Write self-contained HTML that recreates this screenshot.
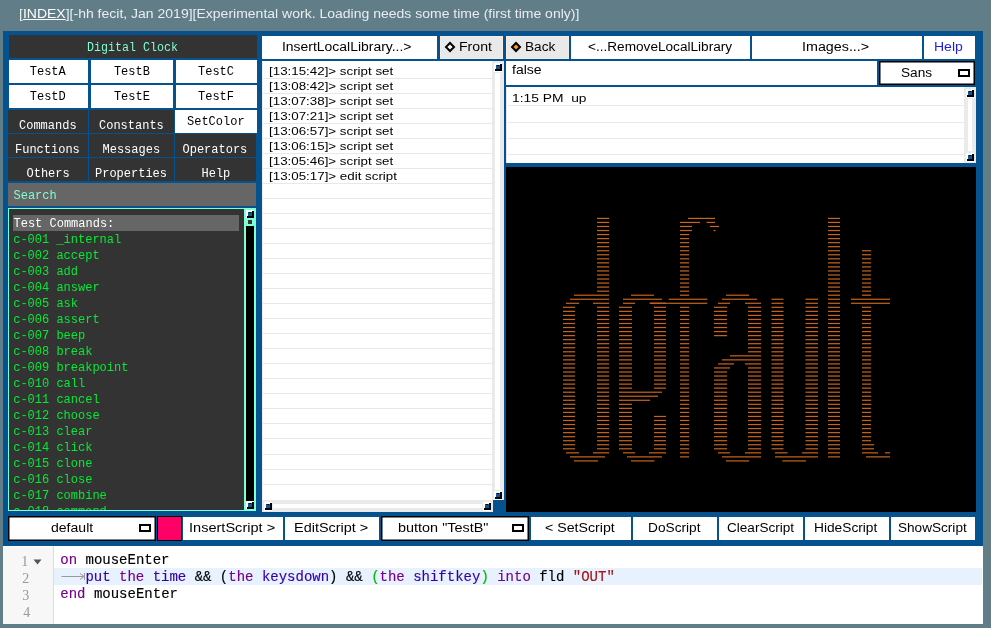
<!DOCTYPE html>
<html><head><meta charset="utf-8"><style>
html,body{margin:0;padding:0;}
#r{position:relative;will-change:transform;width:991px;height:628px;background:#607d88;overflow:hidden;}
#r>div,#r>svg{position:absolute;}
#r>div{white-space:pre;transform-origin:0 0;}
</style></head><body><div id="r">
<div style="left:3px;top:31px;width:980px;height:515px;background:#05528e"></div>
<div style="left:9px;top:35px;width:248px;height:23px;background:#333333"></div>
<div style="left:9px;top:60px;width:79px;height:23px;background:#fff"></div>
<div style="left:9px;top:85px;width:79px;height:23px;background:#fff"></div>
<div style="left:91px;top:60px;width:82px;height:23px;background:#fff"></div>
<div style="left:91px;top:85px;width:82px;height:23px;background:#fff"></div>
<div style="left:176px;top:60px;width:81px;height:23px;background:#fff"></div>
<div style="left:176px;top:85px;width:81px;height:23px;background:#fff"></div>
<div style="left:8px;top:110px;width:80px;height:23px;background:#333333"></div>
<div style="left:89px;top:110px;width:85px;height:23px;background:#333333"></div>
<div style="left:175px;top:110px;width:82px;height:23px;background:#fff"></div>
<div style="left:8px;top:134px;width:80px;height:23px;background:#333333"></div>
<div style="left:89px;top:134px;width:85px;height:23px;background:#333333"></div>
<div style="left:175px;top:134px;width:81px;height:23px;background:#333333"></div>
<div style="left:8px;top:158px;width:80px;height:23px;background:#333333"></div>
<div style="left:89px;top:158px;width:85px;height:23px;background:#333333"></div>
<div style="left:175px;top:158px;width:81px;height:23px;background:#333333"></div>
<div style="left:8px;top:183px;width:248px;height:23px;background:#666"></div>
<div style="left:8px;top:208px;width:248px;height:303px;background:#7fffd4"></div>
<div style="left:9px;top:209px;width:235px;height:301px;background:#333333"></div>
<div style="left:13px;top:215px;width:226px;height:16px;background:#666"></div>
<div style="left:246px;top:226px;width:8px;height:275px;background:#000"></div>
<div style="left:248px;top:220px;width:4px;height:4px;background:#383838"></div>
<div style="left:262px;top:36px;width:175px;height:23px;background:#fff"></div>
<div style="left:440px;top:36px;width:63px;height:23px;background:#e9e9e9;box-shadow:inset 0 0 0 1px #f3ece6"></div>
<div style="left:262px;top:61px;width:230px;height:439px;background:#fff"></div>
<div style="left:262px;top:61px;width:1px;height:438px;background:#eee"></div>
<div style="left:263px;top:78px;width:229px;height:1px;background:#e8e8e8"></div>
<div style="left:263px;top:93px;width:229px;height:1px;background:#e8e8e8"></div>
<div style="left:263px;top:108px;width:229px;height:1px;background:#e8e8e8"></div>
<div style="left:263px;top:123px;width:229px;height:1px;background:#e8e8e8"></div>
<div style="left:263px;top:138px;width:229px;height:1px;background:#e8e8e8"></div>
<div style="left:263px;top:153px;width:229px;height:1px;background:#e8e8e8"></div>
<div style="left:263px;top:168px;width:229px;height:1px;background:#e8e8e8"></div>
<div style="left:263px;top:183px;width:229px;height:1px;background:#e8e8e8"></div>
<div style="left:263px;top:198px;width:229px;height:1px;background:#e8e8e8"></div>
<div style="left:263px;top:213px;width:229px;height:1px;background:#e8e8e8"></div>
<div style="left:263px;top:228px;width:229px;height:1px;background:#e8e8e8"></div>
<div style="left:263px;top:243px;width:229px;height:1px;background:#e8e8e8"></div>
<div style="left:263px;top:258px;width:229px;height:1px;background:#e8e8e8"></div>
<div style="left:263px;top:273px;width:229px;height:1px;background:#e8e8e8"></div>
<div style="left:263px;top:288px;width:229px;height:1px;background:#e8e8e8"></div>
<div style="left:263px;top:303px;width:229px;height:1px;background:#e8e8e8"></div>
<div style="left:263px;top:318px;width:229px;height:1px;background:#e8e8e8"></div>
<div style="left:263px;top:333px;width:229px;height:1px;background:#e8e8e8"></div>
<div style="left:263px;top:348px;width:229px;height:1px;background:#e8e8e8"></div>
<div style="left:263px;top:363px;width:229px;height:1px;background:#e8e8e8"></div>
<div style="left:263px;top:378px;width:229px;height:1px;background:#e8e8e8"></div>
<div style="left:263px;top:393px;width:229px;height:1px;background:#e8e8e8"></div>
<div style="left:263px;top:408px;width:229px;height:1px;background:#e8e8e8"></div>
<div style="left:263px;top:423px;width:229px;height:1px;background:#e8e8e8"></div>
<div style="left:263px;top:438px;width:229px;height:1px;background:#e8e8e8"></div>
<div style="left:263px;top:454px;width:229px;height:1px;background:#e8e8e8"></div>
<div style="left:263px;top:469px;width:229px;height:1px;background:#e8e8e8"></div>
<div style="left:263px;top:484px;width:229px;height:1px;background:#e8e8e8"></div>
<div style="left:492px;top:61px;width:12px;height:439px;background:#eaeaea"></div>
<div style="left:495px;top:73px;width:5px;height:417px;background:#fff"></div>
<div style="left:262px;top:500px;width:231px;height:12px;background:#eaeaea"></div>
<div style="left:273px;top:504px;width:209px;height:4px;background:#fff"></div>
<div style="left:506px;top:36px;width:63px;height:23px;background:#e9e9e9;box-shadow:inset 0 0 0 1px #f3ece6"></div>
<div style="left:571px;top:36px;width:179px;height:23px;background:#fff"></div>
<div style="left:752px;top:36px;width:170px;height:23px;background:#fff"></div>
<div style="left:924px;top:36px;width:51px;height:23px;background:#fff"></div>
<div style="left:506px;top:61px;width:371px;height:24px;background:#fff"></div>
<div style="left:879px;top:61px;width:96px;height:24px;background:#fff;box-shadow:inset 0 0 0 1.5px #000"></div>
<div style="left:506px;top:87px;width:470px;height:76px;background:#fff"></div>
<div style="left:506px;top:88px;width:1px;height:75px;background:#e6e6e6"></div>
<div style="left:508px;top:105px;width:456px;height:1px;background:#e8e8e8"></div>
<div style="left:508px;top:122px;width:456px;height:1px;background:#e8e8e8"></div>
<div style="left:508px;top:138px;width:456px;height:1px;background:#e8e8e8"></div>
<div style="left:508px;top:154px;width:456px;height:1px;background:#e8e8e8"></div>
<div style="left:964px;top:87px;width:12px;height:76px;background:#eaeaea"></div>
<div style="left:968px;top:99px;width:4px;height:52px;background:#fff"></div>
<div style="left:506px;top:167px;width:470px;height:345px;background:#000"></div>
<div style="left:8px;top:516px;width:148px;height:25px;background:#fff;box-shadow:inset 0 0 0 1.5px #000"></div>
<div style="left:157px;top:516px;width:25px;height:25px;background:#ff0066;box-shadow:inset 0 0 0 1px #000"></div>
<div style="left:183px;top:517px;width:100px;height:23px;background:#fff"></div>
<div style="left:285px;top:517px;width:94px;height:23px;background:#fff"></div>
<div style="left:531px;top:517px;width:100px;height:23px;background:#fff"></div>
<div style="left:633px;top:517px;width:84px;height:23px;background:#fff"></div>
<div style="left:719px;top:517px;width:84px;height:23px;background:#fff"></div>
<div style="left:805px;top:517px;width:84px;height:23px;background:#fff"></div>
<div style="left:891px;top:517px;width:84px;height:23px;background:#fff"></div>
<div style="left:381px;top:516px;width:148px;height:25px;background:#fff;box-shadow:inset 0 0 0 1.5px #000"></div>
<div style="left:3px;top:546px;width:980px;height:78px;background:#fff"></div>
<div style="left:3px;top:547px;width:50px;height:77px;background:#f7f7f7"></div>
<div style="left:53px;top:546px;width:1px;height:78px;background:#ddd"></div>
<div style="left:54px;top:568px;width:928px;height:17px;background:#e8f2ff"></div>
<div style="left:139px;top:524px;width:12px;height:8px;box-shadow:inset 0 0 0 2px #000"></div>
<div style="left:512px;top:524px;width:12px;height:8px;box-shadow:inset 0 0 0 2px #000"></div>
<div style="left:958px;top:69px;width:12px;height:8px;box-shadow:inset 0 0 0 2px #000"></div>
<svg style="left:246px;top:210px" width="8" height="8"><rect x="0" y="0" width="8" height="8" fill="#fff"/><rect x="1" y="6" width="7" height="2" fill="#000"/><rect x="6" y="1" width="2" height="7" fill="#000"/><rect x="2" y="2" width="4" height="4" fill="#0b5699"/><rect x="3" y="2" width="2" height="1" fill="#000"/></svg>
<svg style="left:246px;top:501px" width="8" height="8"><rect x="0" y="0" width="8" height="8" fill="#fff"/><rect x="1" y="6" width="7" height="2" fill="#000"/><rect x="6" y="1" width="2" height="7" fill="#000"/><rect x="2" y="2" width="4" height="4" fill="#0b5699"/><rect x="3" y="2" width="2" height="1" fill="#000"/></svg>
<svg style="left:494px;top:63px" width="8" height="9"><rect x="0" y="0" width="8" height="9" fill="#fff"/><rect x="1" y="6" width="7" height="2" fill="#000"/><rect x="6" y="1" width="2" height="7" fill="#000"/><rect x="2" y="2" width="4" height="4" fill="#0b5699"/><rect x="3" y="2" width="2" height="1" fill="#000"/></svg>
<svg style="left:494px;top:491px" width="8" height="9"><rect x="0" y="0" width="8" height="9" fill="#fff"/><rect x="1" y="6" width="7" height="2" fill="#000"/><rect x="6" y="1" width="2" height="7" fill="#000"/><rect x="2" y="2" width="4" height="4" fill="#0b5699"/><rect x="3" y="2" width="2" height="1" fill="#000"/></svg>
<svg style="left:264px;top:502px" width="8" height="9"><rect x="0" y="0" width="8" height="9" fill="#fff"/><rect x="1" y="6" width="7" height="2" fill="#000"/><rect x="6" y="1" width="2" height="7" fill="#000"/><rect x="2" y="2" width="4" height="4" fill="#0b5699"/><rect x="3" y="2" width="2" height="1" fill="#000"/></svg>
<svg style="left:483px;top:502px" width="8" height="9"><rect x="0" y="0" width="8" height="9" fill="#fff"/><rect x="1" y="6" width="7" height="2" fill="#000"/><rect x="6" y="1" width="2" height="7" fill="#000"/><rect x="2" y="2" width="4" height="4" fill="#0b5699"/><rect x="3" y="2" width="2" height="1" fill="#000"/></svg>
<svg style="left:966px;top:89px" width="8" height="9"><rect x="0" y="0" width="8" height="9" fill="#fff"/><rect x="1" y="6" width="7" height="2" fill="#000"/><rect x="6" y="1" width="2" height="7" fill="#000"/><rect x="2" y="2" width="4" height="4" fill="#0b5699"/><rect x="3" y="2" width="2" height="1" fill="#000"/></svg>
<svg style="left:966px;top:153px" width="8" height="9"><rect x="0" y="0" width="8" height="9" fill="#fff"/><rect x="1" y="6" width="7" height="2" fill="#000"/><rect x="6" y="1" width="2" height="7" fill="#000"/><rect x="2" y="2" width="4" height="4" fill="#0b5699"/><rect x="3" y="2" width="2" height="1" fill="#000"/></svg>
<svg style="left:443.3px;top:39.7px" width="14" height="14"><path d="M7 1.6 L12.4 7 L7 12.4 L1.6 7 Z" fill="#000"/><path d="M7 4.4 L9.6 7 L7 9.6 L4.4 7 Z" fill="#fff"/></svg>
<svg style="left:509.29999999999995px;top:39.6px" width="14" height="14"><path d="M7 1.6 L12.4 7 L7 12.4 L1.6 7 Z" fill="#000"/><path d="M7 4.4 L9.6 7 L7 9.6 L4.4 7 Z" fill="#ff9a1a"/></svg>
<svg style="left:61px;top:572px" width="26" height="10"><path d="M0.5 4.5 H22" stroke="#999" stroke-width="1"/><path d="M19 1.5 L23 4.5 L19 7.5" stroke="#999" fill="none" stroke-width="1"/><path d="M23.5 1 V8" stroke="#999" stroke-width="1"/></svg>
<svg style="left:33px;top:559px" width="9" height="6"><path d="M0.5 0.5 H8.5 L4.5 5.5 Z" fill="#555"/></svg>
<svg style="left:0;top:0" width="991" height="628"><g fill="#c66420"><rect x="597" y="217.80" width="12" height="1.2"/><rect x="688" y="217.80" width="27" height="1.2"/><rect x="828" y="217.80" width="12" height="1.2"/><rect x="597" y="221.84" width="12" height="1.2"/><rect x="680" y="221.84" width="20" height="1.2"/><rect x="706.5" y="221.84" width="8.5" height="1.2"/><rect x="828" y="221.84" width="12" height="1.2"/><rect x="597" y="225.88" width="12" height="1.2"/><rect x="680" y="225.88" width="12" height="1.2"/><rect x="710" y="225.88" width="9" height="1.2"/><rect x="828" y="225.88" width="12" height="1.2"/><rect x="597" y="229.93" width="12" height="1.2"/><rect x="680" y="229.93" width="12" height="1.2"/><rect x="713.5" y="229.93" width="2.0" height="1.2"/><rect x="828" y="229.93" width="12" height="1.2"/><rect x="597" y="233.97" width="12" height="1.2"/><rect x="680" y="233.97" width="9" height="1.2"/><rect x="828" y="233.97" width="12" height="1.2"/><rect x="597" y="238.01" width="12" height="1.2"/><rect x="680" y="238.01" width="9" height="1.2"/><rect x="828" y="238.01" width="12" height="1.2"/><rect x="597" y="242.05" width="12" height="1.2"/><rect x="680" y="242.05" width="9" height="1.2"/><rect x="828" y="242.05" width="12" height="1.2"/><rect x="597" y="246.09" width="12" height="1.2"/><rect x="680" y="246.09" width="9" height="1.2"/><rect x="828" y="246.09" width="12" height="1.2"/><rect x="597" y="250.14" width="12" height="1.2"/><rect x="680" y="250.14" width="9" height="1.2"/><rect x="828" y="250.14" width="12" height="1.2"/><rect x="862" y="250.14" width="9" height="1.2"/><rect x="597" y="254.18" width="12" height="1.2"/><rect x="680" y="254.18" width="9" height="1.2"/><rect x="828" y="254.18" width="12" height="1.2"/><rect x="862" y="254.18" width="9" height="1.2"/><rect x="597" y="258.22" width="12" height="1.2"/><rect x="680" y="258.22" width="9" height="1.2"/><rect x="828" y="258.22" width="12" height="1.2"/><rect x="862" y="258.22" width="9" height="1.2"/><rect x="597" y="262.26" width="12" height="1.2"/><rect x="680" y="262.26" width="9" height="1.2"/><rect x="828" y="262.26" width="12" height="1.2"/><rect x="862" y="262.26" width="9" height="1.2"/><rect x="597" y="266.30" width="12" height="1.2"/><rect x="680" y="266.30" width="9" height="1.2"/><rect x="828" y="266.30" width="12" height="1.2"/><rect x="862" y="266.30" width="9" height="1.2"/><rect x="597" y="270.35" width="12" height="1.2"/><rect x="680" y="270.35" width="9" height="1.2"/><rect x="828" y="270.35" width="12" height="1.2"/><rect x="862" y="270.35" width="9" height="1.2"/><rect x="597" y="274.39" width="12" height="1.2"/><rect x="680" y="274.39" width="9" height="1.2"/><rect x="828" y="274.39" width="12" height="1.2"/><rect x="862" y="274.39" width="9" height="1.2"/><rect x="597" y="278.43" width="12" height="1.2"/><rect x="680" y="278.43" width="9" height="1.2"/><rect x="828" y="278.43" width="12" height="1.2"/><rect x="862" y="278.43" width="9" height="1.2"/><rect x="597" y="282.47" width="12" height="1.2"/><rect x="680" y="282.47" width="9" height="1.2"/><rect x="828" y="282.47" width="12" height="1.2"/><rect x="862" y="282.47" width="9" height="1.2"/><rect x="597" y="286.51" width="12" height="1.2"/><rect x="680" y="286.51" width="9" height="1.2"/><rect x="828" y="286.51" width="12" height="1.2"/><rect x="862" y="286.51" width="9" height="1.2"/><rect x="597" y="290.56" width="12" height="1.2"/><rect x="680" y="290.56" width="9" height="1.2"/><rect x="828" y="290.56" width="12" height="1.2"/><rect x="862" y="290.56" width="9" height="1.2"/><rect x="574" y="294.60" width="35" height="1.2"/><rect x="631" y="294.60" width="23" height="1.2"/><rect x="680" y="294.60" width="9" height="1.2"/><rect x="726" y="294.60" width="23" height="1.2"/><rect x="828" y="294.60" width="12" height="1.2"/><rect x="862" y="294.60" width="9" height="1.2"/><rect x="570" y="298.64" width="39" height="1.2"/><rect x="623" y="298.64" width="39" height="1.2"/><rect x="668.7" y="298.64" width="38.59999999999991" height="1.2"/><rect x="722" y="298.64" width="35" height="1.2"/><rect x="771.5" y="298.64" width="12.0" height="1.2"/><rect x="805.5" y="298.64" width="12.5" height="1.2"/><rect x="828" y="298.64" width="12" height="1.2"/><rect x="851" y="298.64" width="39" height="1.2"/><rect x="566" y="302.68" width="13" height="1.2"/><rect x="593" y="302.68" width="16" height="1.2"/><rect x="623" y="302.68" width="12" height="1.2"/><rect x="650" y="302.68" width="16" height="1.2"/><rect x="668.7" y="302.68" width="38.59999999999991" height="1.2"/><rect x="649.6" y="302.68" width="19.100000000000023" height="1.2"/><rect x="718" y="302.68" width="12" height="1.2"/><rect x="745" y="302.68" width="16" height="1.2"/><rect x="771.5" y="302.68" width="12.0" height="1.2"/><rect x="805.5" y="302.68" width="12.5" height="1.2"/><rect x="828" y="302.68" width="12" height="1.2"/><rect x="851" y="302.68" width="39" height="1.2"/><rect x="563" y="306.72" width="12" height="1.2"/><rect x="597" y="306.72" width="12" height="1.2"/><rect x="619" y="306.72" width="13" height="1.2"/><rect x="654" y="306.72" width="12" height="1.2"/><rect x="680" y="306.72" width="9" height="1.2"/><rect x="714" y="306.72" width="13" height="1.2"/><rect x="748" y="306.72" width="13" height="1.2"/><rect x="771.5" y="306.72" width="12.0" height="1.2"/><rect x="805.5" y="306.72" width="12.5" height="1.2"/><rect x="828" y="306.72" width="12" height="1.2"/><rect x="862" y="306.72" width="9" height="1.2"/><rect x="563" y="310.77" width="12" height="1.2"/><rect x="597" y="310.77" width="12" height="1.2"/><rect x="619" y="310.77" width="13" height="1.2"/><rect x="654" y="310.77" width="12" height="1.2"/><rect x="680" y="310.77" width="9" height="1.2"/><rect x="714" y="310.77" width="13" height="1.2"/><rect x="748" y="310.77" width="13" height="1.2"/><rect x="771.5" y="310.77" width="12.0" height="1.2"/><rect x="805.5" y="310.77" width="12.5" height="1.2"/><rect x="828" y="310.77" width="12" height="1.2"/><rect x="862" y="310.77" width="9" height="1.2"/><rect x="563" y="314.81" width="12" height="1.2"/><rect x="597" y="314.81" width="12" height="1.2"/><rect x="619" y="314.81" width="13" height="1.2"/><rect x="654" y="314.81" width="12" height="1.2"/><rect x="680" y="314.81" width="9" height="1.2"/><rect x="714" y="314.81" width="13" height="1.2"/><rect x="748" y="314.81" width="13" height="1.2"/><rect x="771.5" y="314.81" width="12.0" height="1.2"/><rect x="805.5" y="314.81" width="12.5" height="1.2"/><rect x="828" y="314.81" width="12" height="1.2"/><rect x="862" y="314.81" width="9" height="1.2"/><rect x="563" y="318.85" width="12" height="1.2"/><rect x="597" y="318.85" width="12" height="1.2"/><rect x="619" y="318.85" width="13" height="1.2"/><rect x="654" y="318.85" width="12" height="1.2"/><rect x="680" y="318.85" width="9" height="1.2"/><rect x="714" y="318.85" width="13" height="1.2"/><rect x="748" y="318.85" width="13" height="1.2"/><rect x="771.5" y="318.85" width="12.0" height="1.2"/><rect x="805.5" y="318.85" width="12.5" height="1.2"/><rect x="828" y="318.85" width="12" height="1.2"/><rect x="862" y="318.85" width="9" height="1.2"/><rect x="563" y="322.89" width="12" height="1.2"/><rect x="597" y="322.89" width="12" height="1.2"/><rect x="619" y="322.89" width="13" height="1.2"/><rect x="654" y="322.89" width="12" height="1.2"/><rect x="680" y="322.89" width="9" height="1.2"/><rect x="714" y="322.89" width="13" height="1.2"/><rect x="748" y="322.89" width="13" height="1.2"/><rect x="771.5" y="322.89" width="12.0" height="1.2"/><rect x="805.5" y="322.89" width="12.5" height="1.2"/><rect x="828" y="322.89" width="12" height="1.2"/><rect x="862" y="322.89" width="9" height="1.2"/><rect x="563" y="326.93" width="12" height="1.2"/><rect x="597" y="326.93" width="12" height="1.2"/><rect x="619" y="326.93" width="13" height="1.2"/><rect x="654" y="326.93" width="12" height="1.2"/><rect x="680" y="326.93" width="9" height="1.2"/><rect x="714" y="326.93" width="13" height="1.2"/><rect x="748" y="326.93" width="13" height="1.2"/><rect x="771.5" y="326.93" width="12.0" height="1.2"/><rect x="805.5" y="326.93" width="12.5" height="1.2"/><rect x="828" y="326.93" width="12" height="1.2"/><rect x="862" y="326.93" width="9" height="1.2"/><rect x="563" y="330.98" width="12" height="1.2"/><rect x="597" y="330.98" width="12" height="1.2"/><rect x="619" y="330.98" width="13" height="1.2"/><rect x="654" y="330.98" width="12" height="1.2"/><rect x="680" y="330.98" width="9" height="1.2"/><rect x="714" y="330.98" width="13" height="1.2"/><rect x="748" y="330.98" width="13" height="1.2"/><rect x="771.5" y="330.98" width="12.0" height="1.2"/><rect x="805.5" y="330.98" width="12.5" height="1.2"/><rect x="828" y="330.98" width="12" height="1.2"/><rect x="862" y="330.98" width="9" height="1.2"/><rect x="563" y="335.02" width="12" height="1.2"/><rect x="597" y="335.02" width="12" height="1.2"/><rect x="619" y="335.02" width="13" height="1.2"/><rect x="654" y="335.02" width="12" height="1.2"/><rect x="680" y="335.02" width="9" height="1.2"/><rect x="714" y="335.02" width="13" height="1.2"/><rect x="748" y="335.02" width="13" height="1.2"/><rect x="771.5" y="335.02" width="12.0" height="1.2"/><rect x="805.5" y="335.02" width="12.5" height="1.2"/><rect x="828" y="335.02" width="12" height="1.2"/><rect x="862" y="335.02" width="9" height="1.2"/><rect x="563" y="339.06" width="12" height="1.2"/><rect x="597" y="339.06" width="12" height="1.2"/><rect x="619" y="339.06" width="13" height="1.2"/><rect x="654" y="339.06" width="12" height="1.2"/><rect x="680" y="339.06" width="9" height="1.2"/><rect x="748" y="339.06" width="13" height="1.2"/><rect x="771.5" y="339.06" width="12.0" height="1.2"/><rect x="805.5" y="339.06" width="12.5" height="1.2"/><rect x="828" y="339.06" width="12" height="1.2"/><rect x="862" y="339.06" width="9" height="1.2"/><rect x="563" y="343.10" width="12" height="1.2"/><rect x="597" y="343.10" width="12" height="1.2"/><rect x="619" y="343.10" width="13" height="1.2"/><rect x="654" y="343.10" width="12" height="1.2"/><rect x="680" y="343.10" width="9" height="1.2"/><rect x="748" y="343.10" width="13" height="1.2"/><rect x="771.5" y="343.10" width="12.0" height="1.2"/><rect x="805.5" y="343.10" width="12.5" height="1.2"/><rect x="828" y="343.10" width="12" height="1.2"/><rect x="862" y="343.10" width="9" height="1.2"/><rect x="563" y="347.14" width="12" height="1.2"/><rect x="597" y="347.14" width="12" height="1.2"/><rect x="619" y="347.14" width="13" height="1.2"/><rect x="654" y="347.14" width="12" height="1.2"/><rect x="680" y="347.14" width="9" height="1.2"/><rect x="748" y="347.14" width="13" height="1.2"/><rect x="771.5" y="347.14" width="12.0" height="1.2"/><rect x="805.5" y="347.14" width="12.5" height="1.2"/><rect x="828" y="347.14" width="12" height="1.2"/><rect x="862" y="347.14" width="9" height="1.2"/><rect x="563" y="351.19" width="12" height="1.2"/><rect x="597" y="351.19" width="12" height="1.2"/><rect x="619" y="351.19" width="13" height="1.2"/><rect x="654" y="351.19" width="12" height="1.2"/><rect x="680" y="351.19" width="9" height="1.2"/><rect x="748" y="351.19" width="13" height="1.2"/><rect x="771.5" y="351.19" width="12.0" height="1.2"/><rect x="805.5" y="351.19" width="12.5" height="1.2"/><rect x="828" y="351.19" width="12" height="1.2"/><rect x="862" y="351.19" width="9" height="1.2"/><rect x="563" y="355.23" width="12" height="1.2"/><rect x="597" y="355.23" width="12" height="1.2"/><rect x="619" y="355.23" width="13" height="1.2"/><rect x="654" y="355.23" width="12" height="1.2"/><rect x="680" y="355.23" width="9" height="1.2"/><rect x="730" y="355.23" width="31" height="1.2"/><rect x="771.5" y="355.23" width="12.0" height="1.2"/><rect x="805.5" y="355.23" width="12.5" height="1.2"/><rect x="828" y="355.23" width="12" height="1.2"/><rect x="862" y="355.23" width="9" height="1.2"/><rect x="563" y="359.27" width="12" height="1.2"/><rect x="597" y="359.27" width="12" height="1.2"/><rect x="619" y="359.27" width="13" height="1.2"/><rect x="654" y="359.27" width="12" height="1.2"/><rect x="680" y="359.27" width="9" height="1.2"/><rect x="722" y="359.27" width="39" height="1.2"/><rect x="771.5" y="359.27" width="12.0" height="1.2"/><rect x="805.5" y="359.27" width="12.5" height="1.2"/><rect x="828" y="359.27" width="12" height="1.2"/><rect x="862" y="359.27" width="9" height="1.2"/><rect x="563" y="363.31" width="12" height="1.2"/><rect x="597" y="363.31" width="12" height="1.2"/><rect x="619" y="363.31" width="13" height="1.2"/><rect x="654" y="363.31" width="12" height="1.2"/><rect x="680" y="363.31" width="9" height="1.2"/><rect x="718" y="363.31" width="16" height="1.2"/><rect x="745" y="363.31" width="16" height="1.2"/><rect x="771.5" y="363.31" width="12.0" height="1.2"/><rect x="805.5" y="363.31" width="12.5" height="1.2"/><rect x="828" y="363.31" width="12" height="1.2"/><rect x="862" y="363.31" width="9" height="1.2"/><rect x="563" y="367.35" width="12" height="1.2"/><rect x="597" y="367.35" width="12" height="1.2"/><rect x="619" y="367.35" width="13" height="1.2"/><rect x="654" y="367.35" width="12" height="1.2"/><rect x="680" y="367.35" width="9" height="1.2"/><rect x="714" y="367.35" width="16" height="1.2"/><rect x="748" y="367.35" width="13" height="1.2"/><rect x="771.5" y="367.35" width="12.0" height="1.2"/><rect x="805.5" y="367.35" width="12.5" height="1.2"/><rect x="828" y="367.35" width="12" height="1.2"/><rect x="862" y="367.35" width="9" height="1.2"/><rect x="563" y="371.40" width="12" height="1.2"/><rect x="597" y="371.40" width="12" height="1.2"/><rect x="619" y="371.40" width="13" height="1.2"/><rect x="654" y="371.40" width="12" height="1.2"/><rect x="680" y="371.40" width="9" height="1.2"/><rect x="714" y="371.40" width="13" height="1.2"/><rect x="748" y="371.40" width="13" height="1.2"/><rect x="771.5" y="371.40" width="12.0" height="1.2"/><rect x="805.5" y="371.40" width="12.5" height="1.2"/><rect x="828" y="371.40" width="12" height="1.2"/><rect x="862" y="371.40" width="9" height="1.2"/><rect x="563" y="375.44" width="12" height="1.2"/><rect x="597" y="375.44" width="12" height="1.2"/><rect x="619" y="375.44" width="13" height="1.2"/><rect x="654" y="375.44" width="12" height="1.2"/><rect x="680" y="375.44" width="9" height="1.2"/><rect x="714" y="375.44" width="13" height="1.2"/><rect x="748" y="375.44" width="13" height="1.2"/><rect x="771.5" y="375.44" width="12.0" height="1.2"/><rect x="805.5" y="375.44" width="12.5" height="1.2"/><rect x="828" y="375.44" width="12" height="1.2"/><rect x="862" y="375.44" width="9" height="1.2"/><rect x="563" y="379.48" width="12" height="1.2"/><rect x="597" y="379.48" width="12" height="1.2"/><rect x="619" y="379.48" width="13" height="1.2"/><rect x="654" y="379.48" width="12" height="1.2"/><rect x="680" y="379.48" width="9" height="1.2"/><rect x="714" y="379.48" width="13" height="1.2"/><rect x="748" y="379.48" width="13" height="1.2"/><rect x="771.5" y="379.48" width="12.0" height="1.2"/><rect x="805.5" y="379.48" width="12.5" height="1.2"/><rect x="828" y="379.48" width="12" height="1.2"/><rect x="862" y="379.48" width="9" height="1.2"/><rect x="563" y="383.52" width="12" height="1.2"/><rect x="597" y="383.52" width="12" height="1.2"/><rect x="619" y="383.52" width="13" height="1.2"/><rect x="654" y="383.52" width="12" height="1.2"/><rect x="680" y="383.52" width="9" height="1.2"/><rect x="714" y="383.52" width="13" height="1.2"/><rect x="748" y="383.52" width="13" height="1.2"/><rect x="771.5" y="383.52" width="12.0" height="1.2"/><rect x="805.5" y="383.52" width="12.5" height="1.2"/><rect x="828" y="383.52" width="12" height="1.2"/><rect x="862" y="383.52" width="9" height="1.2"/><rect x="563" y="387.56" width="12" height="1.2"/><rect x="597" y="387.56" width="12" height="1.2"/><rect x="619" y="387.56" width="13" height="1.2"/><rect x="654" y="387.56" width="12" height="1.2"/><rect x="680" y="387.56" width="9" height="1.2"/><rect x="714" y="387.56" width="13" height="1.2"/><rect x="748" y="387.56" width="13" height="1.2"/><rect x="771.5" y="387.56" width="12.0" height="1.2"/><rect x="805.5" y="387.56" width="12.5" height="1.2"/><rect x="828" y="387.56" width="12" height="1.2"/><rect x="862" y="387.56" width="9" height="1.2"/><rect x="563" y="391.61" width="12" height="1.2"/><rect x="597" y="391.61" width="12" height="1.2"/><rect x="619" y="391.61" width="43" height="1.2"/><rect x="680" y="391.61" width="9" height="1.2"/><rect x="714" y="391.61" width="13" height="1.2"/><rect x="748" y="391.61" width="13" height="1.2"/><rect x="771.5" y="391.61" width="12.0" height="1.2"/><rect x="805.5" y="391.61" width="12.5" height="1.2"/><rect x="828" y="391.61" width="12" height="1.2"/><rect x="862" y="391.61" width="9" height="1.2"/><rect x="563" y="395.65" width="12" height="1.2"/><rect x="597" y="395.65" width="12" height="1.2"/><rect x="619" y="395.65" width="39" height="1.2"/><rect x="680" y="395.65" width="9" height="1.2"/><rect x="714" y="395.65" width="13" height="1.2"/><rect x="748" y="395.65" width="13" height="1.2"/><rect x="771.5" y="395.65" width="12.0" height="1.2"/><rect x="805.5" y="395.65" width="12.5" height="1.2"/><rect x="828" y="395.65" width="12" height="1.2"/><rect x="862" y="395.65" width="9" height="1.2"/><rect x="563" y="399.69" width="12" height="1.2"/><rect x="597" y="399.69" width="12" height="1.2"/><rect x="619" y="399.69" width="31" height="1.2"/><rect x="680" y="399.69" width="9" height="1.2"/><rect x="714" y="399.69" width="13" height="1.2"/><rect x="748" y="399.69" width="13" height="1.2"/><rect x="771.5" y="399.69" width="12.0" height="1.2"/><rect x="805.5" y="399.69" width="12.5" height="1.2"/><rect x="828" y="399.69" width="12" height="1.2"/><rect x="862" y="399.69" width="9" height="1.2"/><rect x="563" y="403.73" width="12" height="1.2"/><rect x="597" y="403.73" width="12" height="1.2"/><rect x="619" y="403.73" width="13" height="1.2"/><rect x="680" y="403.73" width="9" height="1.2"/><rect x="714" y="403.73" width="13" height="1.2"/><rect x="748" y="403.73" width="13" height="1.2"/><rect x="771.5" y="403.73" width="12.0" height="1.2"/><rect x="805.5" y="403.73" width="12.5" height="1.2"/><rect x="828" y="403.73" width="12" height="1.2"/><rect x="862" y="403.73" width="9" height="1.2"/><rect x="563" y="407.77" width="12" height="1.2"/><rect x="597" y="407.77" width="12" height="1.2"/><rect x="619" y="407.77" width="13" height="1.2"/><rect x="680" y="407.77" width="9" height="1.2"/><rect x="714" y="407.77" width="13" height="1.2"/><rect x="748" y="407.77" width="13" height="1.2"/><rect x="771.5" y="407.77" width="12.0" height="1.2"/><rect x="805.5" y="407.77" width="12.5" height="1.2"/><rect x="828" y="407.77" width="12" height="1.2"/><rect x="862" y="407.77" width="9" height="1.2"/><rect x="563" y="411.82" width="12" height="1.2"/><rect x="597" y="411.82" width="12" height="1.2"/><rect x="619" y="411.82" width="13" height="1.2"/><rect x="680" y="411.82" width="9" height="1.2"/><rect x="714" y="411.82" width="13" height="1.2"/><rect x="748" y="411.82" width="13" height="1.2"/><rect x="771.5" y="411.82" width="12.0" height="1.2"/><rect x="805.5" y="411.82" width="12.5" height="1.2"/><rect x="828" y="411.82" width="12" height="1.2"/><rect x="862" y="411.82" width="9" height="1.2"/><rect x="563" y="415.86" width="12" height="1.2"/><rect x="597" y="415.86" width="12" height="1.2"/><rect x="619" y="415.86" width="13" height="1.2"/><rect x="654" y="415.86" width="12" height="1.2"/><rect x="680" y="415.86" width="9" height="1.2"/><rect x="714" y="415.86" width="13" height="1.2"/><rect x="748" y="415.86" width="13" height="1.2"/><rect x="771.5" y="415.86" width="12.0" height="1.2"/><rect x="805.5" y="415.86" width="12.5" height="1.2"/><rect x="828" y="415.86" width="12" height="1.2"/><rect x="862" y="415.86" width="9" height="1.2"/><rect x="563" y="419.90" width="12" height="1.2"/><rect x="597" y="419.90" width="12" height="1.2"/><rect x="619" y="419.90" width="13" height="1.2"/><rect x="654" y="419.90" width="12" height="1.2"/><rect x="680" y="419.90" width="9" height="1.2"/><rect x="714" y="419.90" width="13" height="1.2"/><rect x="748" y="419.90" width="13" height="1.2"/><rect x="771.5" y="419.90" width="12.0" height="1.2"/><rect x="805.5" y="419.90" width="12.5" height="1.2"/><rect x="828" y="419.90" width="12" height="1.2"/><rect x="862" y="419.90" width="9" height="1.2"/><rect x="563" y="423.94" width="12" height="1.2"/><rect x="597" y="423.94" width="12" height="1.2"/><rect x="619" y="423.94" width="13" height="1.2"/><rect x="654" y="423.94" width="12" height="1.2"/><rect x="680" y="423.94" width="9" height="1.2"/><rect x="714" y="423.94" width="13" height="1.2"/><rect x="748" y="423.94" width="13" height="1.2"/><rect x="771.5" y="423.94" width="12.0" height="1.2"/><rect x="805.5" y="423.94" width="12.5" height="1.2"/><rect x="828" y="423.94" width="12" height="1.2"/><rect x="862" y="423.94" width="9" height="1.2"/><rect x="563" y="427.98" width="12" height="1.2"/><rect x="597" y="427.98" width="12" height="1.2"/><rect x="619" y="427.98" width="13" height="1.2"/><rect x="654" y="427.98" width="12" height="1.2"/><rect x="680" y="427.98" width="9" height="1.2"/><rect x="714" y="427.98" width="13" height="1.2"/><rect x="748" y="427.98" width="13" height="1.2"/><rect x="771.5" y="427.98" width="12.0" height="1.2"/><rect x="805.5" y="427.98" width="12.5" height="1.2"/><rect x="828" y="427.98" width="12" height="1.2"/><rect x="862" y="427.98" width="9" height="1.2"/><rect x="563" y="432.03" width="12" height="1.2"/><rect x="597" y="432.03" width="12" height="1.2"/><rect x="619" y="432.03" width="13" height="1.2"/><rect x="654" y="432.03" width="12" height="1.2"/><rect x="680" y="432.03" width="9" height="1.2"/><rect x="714" y="432.03" width="13" height="1.2"/><rect x="748" y="432.03" width="13" height="1.2"/><rect x="771.5" y="432.03" width="12.0" height="1.2"/><rect x="805.5" y="432.03" width="12.5" height="1.2"/><rect x="828" y="432.03" width="12" height="1.2"/><rect x="862" y="432.03" width="9" height="1.2"/><rect x="563" y="436.07" width="12" height="1.2"/><rect x="597" y="436.07" width="12" height="1.2"/><rect x="619" y="436.07" width="13" height="1.2"/><rect x="654" y="436.07" width="12" height="1.2"/><rect x="680" y="436.07" width="9" height="1.2"/><rect x="714" y="436.07" width="13" height="1.2"/><rect x="748" y="436.07" width="13" height="1.2"/><rect x="771.5" y="436.07" width="12.0" height="1.2"/><rect x="805.5" y="436.07" width="12.5" height="1.2"/><rect x="828" y="436.07" width="12" height="1.2"/><rect x="862" y="436.07" width="9" height="1.2"/><rect x="563" y="440.11" width="12" height="1.2"/><rect x="597" y="440.11" width="12" height="1.2"/><rect x="619" y="440.11" width="13" height="1.2"/><rect x="654" y="440.11" width="12" height="1.2"/><rect x="680" y="440.11" width="9" height="1.2"/><rect x="714" y="440.11" width="13" height="1.2"/><rect x="748" y="440.11" width="13" height="1.2"/><rect x="771.5" y="440.11" width="12.0" height="1.2"/><rect x="805.5" y="440.11" width="12.5" height="1.2"/><rect x="828" y="440.11" width="12" height="1.2"/><rect x="862" y="440.11" width="9" height="1.2"/><rect x="563" y="444.15" width="12" height="1.2"/><rect x="597" y="444.15" width="12" height="1.2"/><rect x="619" y="444.15" width="13" height="1.2"/><rect x="654" y="444.15" width="12" height="1.2"/><rect x="680" y="444.15" width="9" height="1.2"/><rect x="714" y="444.15" width="13" height="1.2"/><rect x="748" y="444.15" width="13" height="1.2"/><rect x="771.5" y="444.15" width="12.0" height="1.2"/><rect x="805.5" y="444.15" width="12.5" height="1.2"/><rect x="828" y="444.15" width="12" height="1.2"/><rect x="862" y="444.15" width="12" height="1.2"/><rect x="563" y="448.19" width="12" height="1.2"/><rect x="597" y="448.19" width="12" height="1.2"/><rect x="619" y="448.19" width="13" height="1.2"/><rect x="654" y="448.19" width="12" height="1.2"/><rect x="680" y="448.19" width="9" height="1.2"/><rect x="714" y="448.19" width="13" height="1.2"/><rect x="748" y="448.19" width="13" height="1.2"/><rect x="771.5" y="448.19" width="12.0" height="1.2"/><rect x="805.5" y="448.19" width="12.5" height="1.2"/><rect x="828" y="448.19" width="12" height="1.2"/><rect x="862" y="448.19" width="12" height="1.2"/><rect x="566" y="452.24" width="13" height="1.2"/><rect x="593" y="452.24" width="16" height="1.2"/><rect x="623" y="452.24" width="12" height="1.2"/><rect x="649" y="452.24" width="17" height="1.2"/><rect x="680" y="452.24" width="9" height="1.2"/><rect x="718" y="452.24" width="12" height="1.2"/><rect x="745" y="452.24" width="16" height="1.2"/><rect x="775" y="452.24" width="12.5" height="1.2"/><rect x="802" y="452.24" width="16" height="1.2"/><rect x="828" y="452.24" width="12" height="1.2"/><rect x="862" y="452.24" width="16" height="1.2"/><rect x="885" y="452.24" width="5" height="1.2"/><rect x="570" y="456.28" width="35" height="1.2"/><rect x="627" y="456.28" width="35" height="1.2"/><rect x="680" y="456.28" width="9" height="1.2"/><rect x="722" y="456.28" width="39" height="1.2"/><rect x="775" y="456.28" width="43" height="1.2"/><rect x="828" y="456.28" width="12" height="1.2"/><rect x="866" y="456.28" width="24" height="1.2"/><rect x="574" y="460.32" width="24" height="1.2"/><rect x="631" y="460.32" width="23.5" height="1.2"/><rect x="726" y="460.32" width="23" height="1.2"/><rect x="782.4" y="460.32" width="23.600000000000023" height="1.2"/></g></svg>
<div style="left:18.88px;top:8.00px;font-family:'Liberation Sans', sans-serif;font-size:12.5px;line-height:12.5px;color:#e8eef0;transform:scaleX(1.1202);">[<span style="text-decoration:underline;color:#fff">INDEX</span>][-hh fecit, Jan 2019][Experimental work. Loading needs some time (first time only)]</div>
<div style="left:86.93px;top:41.50px;font-family:'Liberation Mono', monospace;font-size:12px;line-height:12px;color:#7fffd4;transform:scaleX(0.9707);">Digital Clock</div>
<div style="left:29.75px;top:66.00px;font-family:'Liberation Mono', monospace;font-size:12px;line-height:12px;color:#000;">TestA</div>
<div style="left:113.90px;top:66.00px;font-family:'Liberation Mono', monospace;font-size:12px;line-height:12px;color:#000;">TestB</div>
<div style="left:198.00px;top:66.00px;font-family:'Liberation Mono', monospace;font-size:12px;line-height:12px;color:#000;">TestC</div>
<div style="left:29.75px;top:91.00px;font-family:'Liberation Mono', monospace;font-size:12px;line-height:12px;color:#000;">TestD</div>
<div style="left:113.90px;top:91.00px;font-family:'Liberation Mono', monospace;font-size:12px;line-height:12px;color:#000;">TestE</div>
<div style="left:198.00px;top:91.00px;font-family:'Liberation Mono', monospace;font-size:12px;line-height:12px;color:#000;">TestF</div>
<div style="left:19.00px;top:120.00px;font-family:'Liberation Mono', monospace;font-size:12px;line-height:12px;color:#fff;">Commands</div>
<div style="left:99.00px;top:120.00px;font-family:'Liberation Mono', monospace;font-size:12px;line-height:12px;color:#fff;">Constants</div>
<div style="left:187.00px;top:115.50px;font-family:'Liberation Mono', monospace;font-size:12px;line-height:12px;color:#000;">SetColor</div>
<div style="left:15.00px;top:144.00px;font-family:'Liberation Mono', monospace;font-size:12px;line-height:12px;color:#fff;">Functions</div>
<div style="left:102.50px;top:144.00px;font-family:'Liberation Mono', monospace;font-size:12px;line-height:12px;color:#fff;">Messages</div>
<div style="left:182.50px;top:144.00px;font-family:'Liberation Mono', monospace;font-size:12px;line-height:12px;color:#fff;">Operators</div>
<div style="left:26.50px;top:168.00px;font-family:'Liberation Mono', monospace;font-size:12px;line-height:12px;color:#fff;">Others</div>
<div style="left:95.00px;top:168.00px;font-family:'Liberation Mono', monospace;font-size:12px;line-height:12px;color:#fff;">Properties</div>
<div style="left:201.50px;top:168.00px;font-family:'Liberation Mono', monospace;font-size:12px;line-height:12px;color:#fff;">Help</div>
<div style="left:13.50px;top:190.00px;font-family:'Liberation Mono', monospace;font-size:12px;line-height:12px;color:#7fffd4;">Search</div>
<div style="left:13.50px;top:218.00px;font-family:'Liberation Mono', monospace;font-size:12px;line-height:12px;color:#fff;">Test Commands:</div>
<div style="left:9px;top:209px;width:235px;height:301px;overflow:hidden"><div style="position:absolute;white-space:pre;left:4.20px;top:25.00px;font-family:'Liberation Mono', monospace;font-size:12px;line-height:12px;color:#05eb35;">c-001 _internal</div></div>
<div style="left:9px;top:209px;width:235px;height:301px;overflow:hidden"><div style="position:absolute;white-space:pre;left:4.20px;top:41.00px;font-family:'Liberation Mono', monospace;font-size:12px;line-height:12px;color:#05eb35;">c-002 accept</div></div>
<div style="left:9px;top:209px;width:235px;height:301px;overflow:hidden"><div style="position:absolute;white-space:pre;left:4.20px;top:57.00px;font-family:'Liberation Mono', monospace;font-size:12px;line-height:12px;color:#05eb35;">c-003 add</div></div>
<div style="left:9px;top:209px;width:235px;height:301px;overflow:hidden"><div style="position:absolute;white-space:pre;left:4.20px;top:73.00px;font-family:'Liberation Mono', monospace;font-size:12px;line-height:12px;color:#05eb35;">c-004 answer</div></div>
<div style="left:9px;top:209px;width:235px;height:301px;overflow:hidden"><div style="position:absolute;white-space:pre;left:4.20px;top:89.00px;font-family:'Liberation Mono', monospace;font-size:12px;line-height:12px;color:#05eb35;">c-005 ask</div></div>
<div style="left:9px;top:209px;width:235px;height:301px;overflow:hidden"><div style="position:absolute;white-space:pre;left:4.20px;top:105.00px;font-family:'Liberation Mono', monospace;font-size:12px;line-height:12px;color:#05eb35;">c-006 assert</div></div>
<div style="left:9px;top:209px;width:235px;height:301px;overflow:hidden"><div style="position:absolute;white-space:pre;left:4.20px;top:121.00px;font-family:'Liberation Mono', monospace;font-size:12px;line-height:12px;color:#05eb35;">c-007 beep</div></div>
<div style="left:9px;top:209px;width:235px;height:301px;overflow:hidden"><div style="position:absolute;white-space:pre;left:4.20px;top:137.00px;font-family:'Liberation Mono', monospace;font-size:12px;line-height:12px;color:#05eb35;">c-008 break</div></div>
<div style="left:9px;top:209px;width:235px;height:301px;overflow:hidden"><div style="position:absolute;white-space:pre;left:4.20px;top:153.00px;font-family:'Liberation Mono', monospace;font-size:12px;line-height:12px;color:#05eb35;">c-009 breakpoint</div></div>
<div style="left:9px;top:209px;width:235px;height:301px;overflow:hidden"><div style="position:absolute;white-space:pre;left:4.20px;top:169.00px;font-family:'Liberation Mono', monospace;font-size:12px;line-height:12px;color:#05eb35;">c-010 call</div></div>
<div style="left:9px;top:209px;width:235px;height:301px;overflow:hidden"><div style="position:absolute;white-space:pre;left:4.20px;top:185.00px;font-family:'Liberation Mono', monospace;font-size:12px;line-height:12px;color:#05eb35;">c-011 cancel</div></div>
<div style="left:9px;top:209px;width:235px;height:301px;overflow:hidden"><div style="position:absolute;white-space:pre;left:4.20px;top:201.00px;font-family:'Liberation Mono', monospace;font-size:12px;line-height:12px;color:#05eb35;">c-012 choose</div></div>
<div style="left:9px;top:209px;width:235px;height:301px;overflow:hidden"><div style="position:absolute;white-space:pre;left:4.20px;top:217.00px;font-family:'Liberation Mono', monospace;font-size:12px;line-height:12px;color:#05eb35;">c-013 clear</div></div>
<div style="left:9px;top:209px;width:235px;height:301px;overflow:hidden"><div style="position:absolute;white-space:pre;left:4.20px;top:233.00px;font-family:'Liberation Mono', monospace;font-size:12px;line-height:12px;color:#05eb35;">c-014 click</div></div>
<div style="left:9px;top:209px;width:235px;height:301px;overflow:hidden"><div style="position:absolute;white-space:pre;left:4.20px;top:249.00px;font-family:'Liberation Mono', monospace;font-size:12px;line-height:12px;color:#05eb35;">c-015 clone</div></div>
<div style="left:9px;top:209px;width:235px;height:301px;overflow:hidden"><div style="position:absolute;white-space:pre;left:4.20px;top:265.00px;font-family:'Liberation Mono', monospace;font-size:12px;line-height:12px;color:#05eb35;">c-016 close</div></div>
<div style="left:9px;top:209px;width:235px;height:301px;overflow:hidden"><div style="position:absolute;white-space:pre;left:4.20px;top:281.00px;font-family:'Liberation Mono', monospace;font-size:12px;line-height:12px;color:#05eb35;">c-017 combine</div></div>
<div style="left:9px;top:209px;width:235px;height:301px;overflow:hidden"><div style="position:absolute;white-space:pre;left:4.20px;top:297.00px;font-family:'Liberation Mono', monospace;font-size:12px;line-height:12px;color:#05eb35;">c-018 command</div></div>
<div style="left:268.54px;top:66.00px;font-family:'Liberation Sans', sans-serif;font-size:11.5px;line-height:11.5px;color:#000;transform:scaleX(1.1600);">[13:15:42]&gt; script set</div>
<div style="left:268.54px;top:81.00px;font-family:'Liberation Sans', sans-serif;font-size:11.5px;line-height:11.5px;color:#000;transform:scaleX(1.1600);">[13:08:42]&gt; script set</div>
<div style="left:268.54px;top:96.00px;font-family:'Liberation Sans', sans-serif;font-size:11.5px;line-height:11.5px;color:#000;transform:scaleX(1.1600);">[13:07:38]&gt; script set</div>
<div style="left:268.54px;top:111.00px;font-family:'Liberation Sans', sans-serif;font-size:11.5px;line-height:11.5px;color:#000;transform:scaleX(1.1600);">[13:07:21]&gt; script set</div>
<div style="left:268.54px;top:126.00px;font-family:'Liberation Sans', sans-serif;font-size:11.5px;line-height:11.5px;color:#000;transform:scaleX(1.1600);">[13:06:57]&gt; script set</div>
<div style="left:268.54px;top:141.00px;font-family:'Liberation Sans', sans-serif;font-size:11.5px;line-height:11.5px;color:#000;transform:scaleX(1.1600);">[13:06:15]&gt; script set</div>
<div style="left:268.54px;top:156.00px;font-family:'Liberation Sans', sans-serif;font-size:11.5px;line-height:11.5px;color:#000;transform:scaleX(1.1600);">[13:05:46]&gt; script set</div>
<div style="left:268.54px;top:171.00px;font-family:'Liberation Sans', sans-serif;font-size:11.5px;line-height:11.5px;color:#000;transform:scaleX(1.1600);">[13:05:17]&gt; edit script</div>
<div style="left:282.49px;top:40.60px;font-family:'Liberation Sans', sans-serif;font-size:12.5px;line-height:12.5px;color:#000;transform:scaleX(1.1148);">InsertLocalLibrary...&gt;</div>
<div style="left:458.57px;top:40.60px;font-family:'Liberation Sans', sans-serif;font-size:12.5px;line-height:12.5px;color:#000;transform:scaleX(1.1286);">Front</div>
<div style="left:524.51px;top:40.60px;font-family:'Liberation Sans', sans-serif;font-size:12.5px;line-height:12.5px;color:#000;transform:scaleX(1.0889);">Back</div>
<div style="left:588.01px;top:40.60px;font-family:'Liberation Sans', sans-serif;font-size:12.5px;line-height:12.5px;color:#000;transform:scaleX(1.0885);">&lt;...RemoveLocalLibrary</div>
<div style="left:802.26px;top:40.60px;font-family:'Liberation Sans', sans-serif;font-size:12.5px;line-height:12.5px;color:#000;transform:scaleX(1.1439);">Images...&gt;</div>
<div style="left:934.18px;top:40.60px;font-family:'Liberation Sans', sans-serif;font-size:12.5px;line-height:12.5px;color:#1f1fe6;transform:scaleX(1.1208);">Help</div>
<div style="left:511.90px;top:63.70px;font-family:'Liberation Sans', sans-serif;font-size:12.5px;line-height:12.5px;color:#000;transform:scaleX(1.1231);">false</div>
<div style="left:900.61px;top:66.60px;font-family:'Liberation Sans', sans-serif;font-size:12.5px;line-height:12.5px;color:#000;transform:scaleX(1.0926);">Sans</div>
<div style="left:511.80px;top:92.80px;font-family:'Liberation Sans', sans-serif;font-size:11.5px;line-height:11.5px;color:#000;transform:scaleX(1.2016);">1:15 PM&nbsp;&nbsp;up</div>
<div style="left:50.50px;top:522.00px;font-family:'Liberation Sans', sans-serif;font-size:12.5px;line-height:12.5px;color:#000;transform:scaleX(1.1237);">default</div>
<div style="left:189.04px;top:522.00px;font-family:'Liberation Sans', sans-serif;font-size:12.5px;line-height:12.5px;color:#000;transform:scaleX(1.1644);">InsertScript &gt;</div>
<div style="left:294.14px;top:522.00px;font-family:'Liberation Sans', sans-serif;font-size:12.5px;line-height:12.5px;color:#000;transform:scaleX(1.1556);">EditScript &gt;</div>
<div style="left:398.35px;top:522.00px;font-family:'Liberation Sans', sans-serif;font-size:12.5px;line-height:12.5px;color:#000;transform:scaleX(1.1545);">button "TestB"</div>
<div style="left:544.77px;top:522.00px;font-family:'Liberation Sans', sans-serif;font-size:12.5px;line-height:12.5px;color:#000;transform:scaleX(1.1344);">&lt; SetScript</div>
<div style="left:647.50px;top:522.00px;font-family:'Liberation Sans', sans-serif;font-size:12.5px;line-height:12.5px;color:#000;transform:scaleX(1.0957);">DoScript</div>
<div style="left:726.51px;top:522.00px;font-family:'Liberation Sans', sans-serif;font-size:12.5px;line-height:12.5px;color:#000;transform:scaleX(1.0852);">ClearScript</div>
<div style="left:814.30px;top:522.00px;font-family:'Liberation Sans', sans-serif;font-size:12.5px;line-height:12.5px;color:#000;transform:scaleX(1.0982);">HideScript</div>
<div style="left:897.61px;top:522.00px;font-family:'Liberation Sans', sans-serif;font-size:12.5px;line-height:12.5px;color:#000;transform:scaleX(1.0871);">ShowScript</div>
<div style="left:21.20px;top:555.00px;font-family:'Liberation Serif', serif;font-size:14px;line-height:14px;color:#999;">1</div>
<div style="left:22.20px;top:572.00px;font-family:'Liberation Serif', serif;font-size:14px;line-height:14px;color:#999;">2</div>
<div style="left:22.20px;top:589.00px;font-family:'Liberation Serif', serif;font-size:14px;line-height:14px;color:#999;">3</div>
<div style="left:23.20px;top:606.00px;font-family:'Liberation Serif', serif;font-size:14px;line-height:14px;color:#999;">4</div>
<div style="left:60.30px;top:553.00px;font-family:'Liberation Mono', monospace;font-size:14px;line-height:14px;color:#000;-webkit-text-stroke:0.15px currentColor;"><span style="color:#708">on</span> mouseEnter</div>
<div style="left:85.40px;top:570.00px;font-family:'Liberation Mono', monospace;font-size:14px;line-height:14px;color:#000;-webkit-text-stroke:0.15px currentColor;"><span style="color:#30a">put</span> <span style="color:#708">the</span> <span style="color:#30a">time</span> &amp;&amp; (<span style="color:#708">the</span> <span style="color:#30a">keysdown</span>) &amp;&amp; <span style="color:#0b0">(</span><span style="color:#708">the</span> <span style="color:#30a">shiftkey</span><span style="color:#0b0">)</span> <span style="color:#708">into</span> fld <span style="color:#a11">"OUT"</span></div>
<div style="left:60.30px;top:587.00px;font-family:'Liberation Mono', monospace;font-size:14px;line-height:14px;color:#000;-webkit-text-stroke:0.15px currentColor;"><span style="color:#708">end</span> mouseEnter</div>
</div></body></html>
